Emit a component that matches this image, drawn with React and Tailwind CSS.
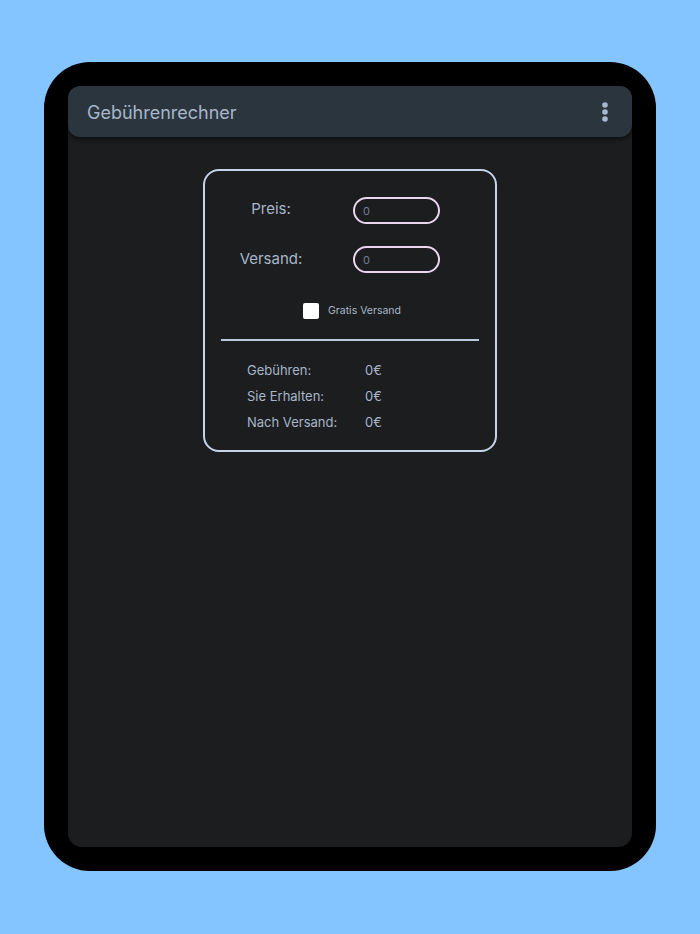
import React, { useState } from 'react';

const font = { fontFamily: 'Inter, "Noto Sans", sans-serif' };

const KebabIcon = () => (
  <svg width="8" height="22" viewBox="0 0 8 22" className="text-[#a8b8cc]">
    <circle cx="4" cy="4" r="2.8" fill="currentColor" />
    <circle cx="4" cy="11" r="2.8" fill="currentColor" />
    <circle cx="4" cy="18" r="2.8" fill="currentColor" />
  </svg>
);

const InputRow = ({ label, value, onChange, labelClass }) => (
  <div className="flex items-center">
    <div className={`w-[132px] text-center text-[15px] text-[#a7b6c8] ${labelClass}`}>{label}</div>
    <input
      type="text"
      value={value}
      onChange={onChange}
      placeholder="0"
      className="ml-[16px] w-[87px] h-[27px] rounded-full border-2 border-[#ead6ee] bg-transparent pl-[8px] text-[11px] text-[#c8d2de] placeholder:text-[#6f7f90] outline-none"
    />
  </div>
);

const ResultRow = ({ label, value }) => (
  <div className="flex items-center h-[26px] pl-[42px] text-[13px] text-[#a7b6c8]">
    <div className="w-[118px]">{label}</div>
    <div>{value}</div>
  </div>
);

const App = () => {
  const [preis, setPreis] = useState('');
  const [versand, setVersand] = useState('');
  const [gratis, setGratis] = useState(false);

  return (
    <div className="w-[700px] h-[934px] bg-[#84c4ff] pt-[62px] pl-[44px]" style={font}>
      <div className="w-[612px] h-[809px] bg-black rounded-[46px] p-[24px]">
        <div className="h-full bg-[#1c1d1f] rounded-[14px] flex flex-col">
          <div className="h-[51px] shrink-0 bg-[#2b353e] rounded-[12px] shadow-[0_2px_5px_rgba(0,0,0,0.55)] flex items-center justify-between pl-[19px] pr-[23px]">
            <h1 className="text-[18px] text-[#a7b6c8] mt-[2px]">Gebührenrechner</h1>
            <KebabIcon />
          </div>

          <div className="flex justify-center pt-[32px]">
            <div className="w-[294px] border-2 border-[#c4d4e6] rounded-[16px] pt-[26px] pb-[14px] px-[16px]">
              <div className="-mx-[16px] flex flex-col gap-[22px]">
                <InputRow label="Preis:" labelClass="-mt-[3px]" value={preis} onChange={(e) => setPreis(e.target.value)} />
                <InputRow label="Versand:" labelClass="" value={versand} onChange={(e) => setVersand(e.target.value)} />
              </div>

              <label className="flex items-center justify-center gap-[9px] mt-[30px] pl-[4px]">
                <input
                  type="checkbox"
                  checked={gratis}
                  onChange={(e) => setGratis(e.target.checked)}
                  className="appearance-none w-[16px] h-[16px] bg-white rounded-[2px]"
                />
                <span className="text-[10.5px] text-[#a7b6c8]">Gratis Versand</span>
              </label>

              <div className="mt-[20px] h-[2px] bg-[#b9c9db]" />

              <div className="mt-[17px] -mx-[16px]">
                <ResultRow label="Gebühren:" value="0€" />
                <ResultRow label="Sie Erhalten:" value="0€" />
                <ResultRow label="Nach Versand:" value="0€" />
              </div>
            </div>
          </div>
        </div>
      </div>
    </div>
  );
};

export default App;
